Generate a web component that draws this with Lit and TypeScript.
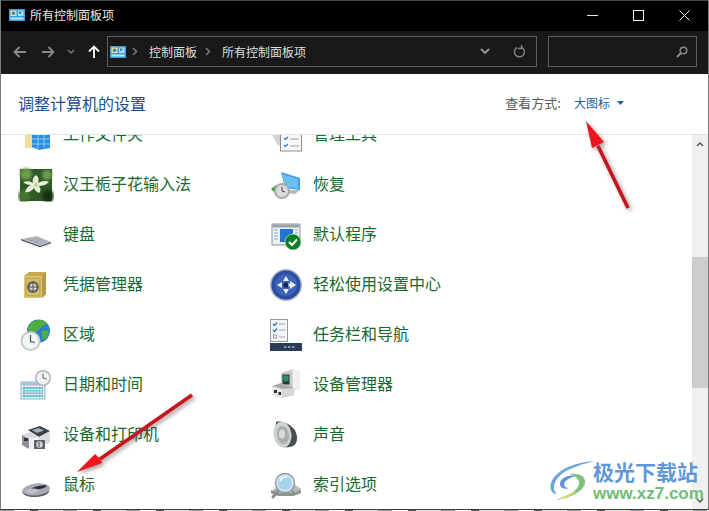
import { LitElement, html, css, svg } from "lit";
import { customElement } from "lit/decorators.js";

const cpIcon = html`<svg class="cp" width="16" height="12" viewBox="0 0 16 12">
  <rect width="16" height="12" fill="#3f9ed8"/>
  <rect x="1.500" y="1.500" width="6" height="5.500" fill="#e4dfa8"/>
  <circle cx="4.500" cy="4.200" r="1.700" fill="#3f86ae"/>
  <rect x="9" y="1.500" width="5.500" height="5.500" fill="#a8dcf4"/>
  <rect x="10" y="2.500" width="2.200" height="2.200" fill="#2f78a6"/>
  <rect x="1.500" y="8.500" width="13" height="2" fill="#bfe6f7"/>
</svg>`;

const left = [
  svg`<rect x="7" y="16" width="8" height="16" fill="#f2dc98"/><path d="M14 18l18-2v16l-11 2-7-3z" fill="#2b8fdc"/><path d="M14 23h18M14 28h18M20 17v16M26 17v15" stroke="#8cc8f2" stroke-width="1"/>`,
  svg`<defs><filter id="bl"><feGaussianBlur stdDeviation="1.500"/></filter><filter id="bl2"><feGaussianBlur stdDeviation=".5"/></filter></defs><rect x="2" y="3" width="32" height="32" fill="#2f5a24"/><g filter="url(#bl)"><circle cx="8" cy="8" r="6" fill="#6c9a4c"/><circle cx="29" cy="9" r="5" fill="#6f9c55"/><circle cx="30" cy="30" r="6" fill="#172f10"/><circle cx="6" cy="30" r="6" fill="#44752f"/></g><path d="M18 9c3 2 3 5 2 8 3-2 8-3 11-1-3 3-7 4-10 4 2 3 2 5 0 7-3-1-4-3-5-5-2 3-6 5-9 4 1-3 3-6 6-7-3 0-6-1-8-3 4-1 7-1 10 1-1-3 0-6 3-8z" fill="#e8ecdc" filter="url(#bl2)"/><circle cx="18" cy="19" r="2" fill="#c8d490"/>`,
  svg`<path d="M3 23l16-3 14 6-11 4z" fill="#bcc0ca"/><path d="M3 23l19 7 11-4v1.200l-11 4-19-7z" fill="#45474f"/><path d="M8 22.500l16 5.500M12 22l15 5M16 21.500l14 4.500M11 25l5-1M16 27l5-1.500" stroke="#8a8e9b" stroke-width=".6"/>`,
  svg`<path d="M6 10l5-4h17v22l-4 4H6z" fill="#c9a94f"/><path d="M6 10h18v22H6z" fill="#e0c878"/><path d="M24 10l4-4v22l-4 4z" fill="#b8994a"/><rect x="8" y="12" width="14" height="18" fill="#d8bd68" stroke="#a78c40" stroke-width=".7"/><circle cx="15" cy="21" r="6" fill="#6d6a60"/><circle cx="15" cy="21" r="3.500" fill="#d6d4cc"/><path d="M15 16v10M10 21h10" stroke="#4a483f" stroke-width=".9"/>`,
  svg`<circle cx="20.500" cy="15" r="11.500" fill="#2f7fc8"/><path d="M12 8c4-4 11-5 15-3 3 3 0 5-3 5-1 3-4 3-6 6-3 0-7 0-8-2 0-3 0-4 2-6zM24 15c3-1 6 0 7 1-1 4-3 6-5 8-2-2-3-6-2-9z" fill="#4fae3e"/><circle cx="12.500" cy="25" r="10" fill="#c4c9cc"/><circle cx="12.500" cy="25" r="8" fill="#f3f5f6"/><path d="M12.500 19v6.500l4.500 1" fill="none" stroke="#4a4f55" stroke-width="1.200"/>`,
  svg`<rect x="3" y="16" width="24" height="17" fill="#e3edf3" stroke="#8eb1c4"/><rect x="4" y="16.500" width="22" height="3" fill="#9ec4d8"/><path d="M5 21h20v10H5z" fill="#4fb3c4"/><path d="M5 23.500h20M5 26h20M5 28.500h20M8 21v10M11 21v10M14 21v10M17 21v10M20 21v10M23 21v10" stroke="#e9f5f8" stroke-width=".8"/><circle cx="25" cy="12" r="8" fill="#aeb4b8"/><circle cx="25" cy="12" r="6.500" fill="#f2f4f5"/><path d="M25 7.500V12l3.500 1" fill="none" stroke="#555" stroke-width="1"/>`,
  svg`<path d="M10 14l12-4 10 5-11 6z" fill="#3a3f48"/><path d="M14 14l7-2 5 2.500-7 2.500z" fill="#a8aeb6"/><path d="M4 19l8-3 9 5 11-5v10l-8 4H11l-7-4z" fill="#d8dadc"/><path d="M4 19l7 4v10l-7-4z" fill="#8f9195"/><path d="M11 23l10-2v12H11z" fill="#f0f1f1"/><rect x="6" y="22" width="4" height="3" fill="#33363b"/><rect x="16" y="24" width="11" height="9" fill="#60646a"/><circle cx="21.500" cy="28.500" r="3.200" fill="#d4d7da"/><path d="M21 26v5" stroke="#444" stroke-width="1"/>`,
  svg`<ellipse cx="18" cy="24" rx="14" ry="6.500" fill="#a5abb1" transform="rotate(-8 18 24)"/><path d="M4.500 26c5 5 19 5 27-1.500-.5 3.500-6 6-13 6.500-7 .5-13-1.500-14-5z" fill="#5c6268"/><ellipse cx="21" cy="21.500" rx="8" ry="1.600" fill="#2a2e33" transform="rotate(-12 21 21.500)"/><ellipse cx="14" cy="25" rx="6" ry="2.500" fill="#bcc2c7" transform="rotate(-8 14 25)"/>`,
];

const right = [
  svg`<path d="M4 18l6 12 3-2V18z" fill="#d0d2d6"/><rect x="12.500" y="18" width="21" height="17" fill="#f6f7f8" stroke="#8a8d92"/><path d="M16 22l1.500 1.500L20 21M16 29l1.500 1.500L20 28" fill="none" stroke="#2d7fc4" stroke-width="1.200"/><path d="M22 23h9M22 30h9" stroke="#9da1a6" stroke-width="1"/>`,
  svg`<path d="M13 6l19 6v12l-15-2z" fill="#3f9fe4"/><path d="M14 8l16 5v9.500l-13-2z" fill="#6cbff0"/><path d="M20 24l12 0-5 4-8-1z" fill="#b4b8bc"/><path d="M3 23l5-4v3c4-1 6 1 5 4-2-1-3-2-5-1v3z" fill="#3ca33c"/><circle cx="14" cy="25" r="8" fill="#a6aaae"/><circle cx="14" cy="25" r="6" fill="#d9dbdd"/><path d="M14 21v4l3 1" fill="none" stroke="#444" stroke-width="1"/>`,
  svg`<rect x="4" y="8" width="28" height="21" fill="#eef1f4" stroke="#8d949b"/><rect x="4.500" y="8.500" width="27" height="3" fill="#9aa3ac"/><rect x="12" y="13" width="13" height="13" fill="#1e74cf"/><path d="M6 14h4M6 17h4M6 20h4M6 23h4M27 14h3M27 17h3" stroke="#7dabd0" stroke-width="1"/><circle cx="25" cy="26" r="8" fill="#0e7f24"/><circle cx="25" cy="26" r="8" fill="none" stroke="#e8f4e8" stroke-width=".6"/><path d="M21 26l3 3 5-5.500" fill="none" stroke="#fff" stroke-width="2"/>`,
  svg`<circle cx="18" cy="19" r="16" fill="#aab0c6"/><circle cx="18" cy="19" r="14.500" fill="#2b4da0"/><circle cx="18" cy="19" r="11" fill="#3e63b6"/><path d="M18 10l3 5h-6zM18 28l-3-5h6zM9 19l5-3v6zM28 19l-6-4v2.500h-4v3h4V23z" fill="#e9eef8"/><circle cx="18" cy="19" r="2.500" fill="#0f2467"/>`,
  svg`<rect x="2.500" y="3.500" width="17" height="22" fill="#f4f5f7" stroke="#94989e"/><path d="M5 8l1.500 1.500L9 6.500M5 14l1.500 1.500L9 12.500" fill="none" stroke="#1f78c8" stroke-width="1.300"/><rect x="5.500" y="19" width="3" height="3" fill="none" stroke="#8b8f95" stroke-width=".8"/><path d="M11 8h6M11 14h6M11 21h6" stroke="#a2a6ab" stroke-width="1"/><rect x="2" y="27" width="32" height="8" fill="#2c3c58"/><path d="M16 31h2.500M20 31h2.500M24 31h2.500" stroke="#a3adbc" stroke-width="1.600"/>`,
  svg`<path d="M13 7l12-4 7 3v17l-14 5z" fill="#dcdeda"/><path d="M25 3l7 3v17l-7 3z" fill="#f0f1ef"/><path d="M13 7l11-3v19l-11 3z" fill="#c8cac6"/><rect x="14.500" y="8.500" width="7" height="10" fill="#1d3a33"/><rect x="15.500" y="9.500" width="5" height="6" fill="#2f8c63"/><path d="M4 20l9-3 13 5v7l-12 3-10-3z" fill="#a8aaa8"/><path d="M4 20l10 3v9L4 29z" fill="#e8e9e7"/><rect x="6" y="24" width="3" height="3" fill="#2f3030"/><rect x="10.500" y="26" width="2.500" height="3" fill="#2f3030"/><path d="M14 23l12-1v7l-12 3z" fill="#d6d8d5"/>`,
  svg`<path d="M8 6c8-2 14 3 18 7 3 4 4 10 2 14-2 4-8 5-13 4C10 27 7 21 7 14z" fill="#4a4e52"/><ellipse cx="14.500" cy="18.500" rx="9" ry="13" fill="#ccd2d0" transform="rotate(-8 14.500 18.500)"/><ellipse cx="15" cy="19" rx="6" ry="9" fill="#a8b0ae" transform="rotate(-8 15 19)"/><ellipse cx="14" cy="18" rx="3" ry="4.500" fill="#d8dcdb"/>`,
  svg`<path d="M6 23l8-5h12l7 5v4l-8 3H10l-7-3z" fill="#b6bab8"/><path d="M3 24l8 3h14l8-3v3l-8 3H11l-8-3z" fill="#8e9290"/><circle cx="25" cy="26" r="1.200" fill="#4cae4c"/><path d="M5 31l6-7" stroke="#8a8d8c" stroke-width="3" stroke-linecap="round"/><circle cx="17" cy="17" r="9.500" fill="#d8e6ee" stroke="#8da0aa" stroke-width="1.500"/><circle cx="17" cy="17" r="7" fill="#a9d3ec"/><path d="M12 15c1-3 4-4 7-4" fill="none" stroke="#fff" stroke-width="1.500"/>`,
];

const leftNames = ["工作文件夹", "汉王栀子花输入法", "键盘", "凭据管理器", "区域", "日期和时间", "设备和打印机", "鼠标"];
const rightNames = ["管理工具", "恢复", "默认程序", "轻松使用设置中心", "任务栏和导航", "设备管理器", "声音", "索引选项"];

@customElement("app-root")
export class AppRoot extends LitElement {
  static styles = css`
    :host {
      display: block;
      width: 709px;
      height: 511px;
      overflow: hidden;
      background: repeating-linear-gradient(90deg, #9a9a9a 0 14px, #fff 14px 30px, #555 30px 38px, #e8e8e8 38px 63px);
      font-family: "Noto Sans CJK SC", "Liberation Sans", sans-serif;
    }
    .window {
      position: relative;
      box-sizing: border-box;
      width: 709px;
      height: 510px;
      background: #fff;
      border-left: 1px solid #7c7c7c;
      border-right: 1px solid #7c7c7c;
      border-bottom: 1px solid #3c3c3c;
      display: flex;
      flex-direction: column;
      overflow: hidden;
    }
    .titlebar {
      height: 31px;
      flex: none;
      background: #000;
      color: #e8e8e8;
      display: flex;
      align-items: center;
      padding: 0 0 2px 8px;
      font-size: 12px;
      box-sizing: border-box;
      border-top: 1px solid #4a4a4a;
    }
    .titlebar .cp { margin-right: 5px; }
    .titlebar span { padding-bottom: 1px; }
    .winbtns {
      margin-left: auto;
      display: flex;
      gap: 35px;
      padding-right: 18px;
      align-items: center;
    }
    .winbtns svg { display: block; }
    .toolbar {
      height: 43px;
      flex: none;
      background: #191919;
      display: flex;
      align-items: center;
      box-sizing: border-box;
      padding: 0 12px 2px 0;
    }
    .nav {
      width: 106px;
      display: flex;
      flex: none;
      align-items: center;
      padding-left: 12px;
      box-sizing: border-box;
      gap: 14px;
    }
    .nav svg { display: block; }
    .nav .more { margin: 0 -1px 0 -2px; }
    .address {
      width: 430px;
      height: 31px;
      flex: none;
      box-sizing: border-box;
      border: 1px solid #5e5e5e;
      display: flex;
      align-items: center;
      padding-left: 2px;
      color: #dedede;
      font-size: 12px;
    }
    .address span { padding-bottom: 1px; }
    .address .sep { margin: 0 11px 0 6px; display: block; }
    .address .sep2 { margin: 0 11px 0 8px; display: block; }
    .address .tail { margin-left: auto; display: flex; align-items: center; gap: 23px; padding-right: 11px; }
    .search {
      width: 149px;
      height: 31px;
      flex: none;
      margin-left: 11px;
      box-sizing: border-box;
      border: 1px solid #5e5e5e;
      display: flex;
      align-items: center;
      justify-content: flex-end;
      padding-right: 8px;
    }
    .header {
      height: 60px;
      flex: none;
      display: flex;
      align-items: center;
      padding: 0 84px 0 17px;
      border-bottom: 1px solid #d9e6ec;
    }
    .heading { font-size: 16px; color: #1f4c8f; padding-bottom: 2px; }
    .view { margin-left: auto; font-size: 12px; color: #5a5a5a; display: flex; align-items: center; }
    .view .colon { margin-right: 13px; font-size: 13px; padding-bottom: 3px; }
    .view .mode { color: #1d5f9e; margin-right: 7px; padding-bottom: 3px; }
    .view svg { margin-bottom: 2px; }
    .body { flex: 1; display: flex; min-height: 0; }
    .list { flex: 1; overflow: hidden; padding-left: 17px; }
    .grid { display: grid; grid-template-columns: 250px 250px; margin-top: -26px; }
    .item {
      height: 50px;
      display: flex;
      align-items: center;
      gap: 9px;
      color: #17692f;
      font-size: 16px;
      white-space: nowrap;
    }
    .item span { padding-bottom: 2px; }
    .item svg { display: block; flex: none; }
    .scroll {
      width: 16px;
      flex: none;
      background: #f0f0f0;
      display: flex;
      flex-direction: column;
    }
    .scroll .up { height: 17px; display: flex; align-items: center; justify-content: center; flex: none; }
    .thumb { height: 131px; margin-top: 105px; background: #cdcdcd; flex: none; }
    .scroll .down { margin-top: auto; height: 17px; display: flex; align-items: center; justify-content: center; flex: none; }
    .arrows { position: absolute; left: -1px; top: 0; pointer-events: none; filter: drop-shadow(2px 2px 2px rgba(70, 40, 40, 0.5)); }
    .mark { position: absolute; left: 547px; top: 459px; width: 160px; height: 50px; display: flex; pointer-events: none; }
    .mark svg { flex: none; display: block; }
    .mark .txt { margin-left: -5px; display: flex; flex-direction: column; align-items: flex-start; }
    .mark .cn { font-size: 21px; line-height: 25px; font-weight: 700; color: #5f97d8; white-space: nowrap; }
    .mark .en { font-family: "Liberation Sans", sans-serif; font-size: 17px; line-height: 20px; color: #72bb78; font-weight: 700; white-space: nowrap; }
  `;

  private item(name: string, icon: unknown) {
    return html`<div class="item">
      <svg width="36" height="36" viewBox="0 0 36 36">${icon}</svg><span>${name}</span>
    </div>`;
  }

  render() {
    const rows = leftNames.map((n, i) => [this.item(n, left[i]), this.item(rightNames[i], right[i])]);
    const chev = html`<svg class="sep" width="6" height="9" viewBox="0 0 6 9"><path d="M1 1l3.500 3.500L1 8" fill="none" stroke="#7a7a7a" stroke-width="1.500"/></svg>`;
    const chev2 = html`<svg class="sep2" width="6" height="9" viewBox="0 0 6 9"><path d="M1 1l3.500 3.500L1 8" fill="none" stroke="#7a7a7a" stroke-width="1.500"/></svg>`;
    return html`<div class="window">
      <div class="titlebar">
        ${cpIcon}<span>所有控制面板项</span>
        <div class="winbtns">
          <svg width="11" height="11" viewBox="0 0 11 11"><path d="M0 5.500h11" stroke="#e6e6e6"/></svg>
          <svg width="11" height="11" viewBox="0 0 11 11"><rect x=".5" y=".5" width="10" height="10" fill="none" stroke="#f0f0f0"/></svg>
          <svg width="11" height="11" viewBox="0 0 11 11"><path d="M.5.500l10 10M10.500.500l-10 10" stroke="#f0f0f0"/></svg>
        </div>
      </div>
      <div class="toolbar">
        <div class="nav">
          <svg width="14" height="12" viewBox="0 0 14 12"><path d="M13 6H2M6.500 1L1.500 6l5 5" fill="none" stroke="#8a8a8a" stroke-width="1.800"/></svg>
          <svg width="14" height="12" viewBox="0 0 14 12"><path d="M1 6h11M7.500 1l5 5-5 5" fill="none" stroke="#8a8a8a" stroke-width="1.800"/></svg>
          <svg class="more" width="8" height="6" viewBox="0 0 8 6"><path d="M1 1l3 3 3-3" fill="none" stroke="#777" stroke-width="1.500"/></svg>
          <svg width="12" height="14" viewBox="0 0 12 14"><path d="M6 13V2M1 6.500l5-5 5 5" fill="none" stroke="#f4f4f4" stroke-width="1.900"/></svg>
        </div>
        <div class="address">
          ${cpIcon}${chev}<span>控制面板</span>${chev2}<span>所有控制面板项</span>
          <div class="tail">
            <svg width="10" height="7" viewBox="0 0 10 7"><path d="M1 1l4 4 4-4" fill="none" stroke="#9a9a9a" stroke-width="1.800"/></svg>
            <svg width="12" height="13" viewBox="0 0 12 13"><path d="M4 2.500a5 5 0 1 0 4.500-.2M8.500 0v3.500H5" fill="none" stroke="#7e7e7e" stroke-width="1.500"/></svg>
          </div>
        </div>
        <div class="search">
          <svg width="12" height="12" viewBox="0 0 12 12"><circle cx="7.500" cy="4.500" r="3.300" fill="none" stroke="#8a8a8a" stroke-width="1.500"/><path d="M5 7l-4 4" stroke="#8a8a8a" stroke-width="2"/></svg>
        </div>
      </div>
      <div class="header">
        <span class="heading">调整计算机的设置</span>
        <div class="view">
          <span class="colon">查看方式:</span><span class="mode">大图标</span>
          <svg width="7" height="4" viewBox="0 0 7 4"><path d="M0 0h7L3.500 4z" fill="#1d5f9e"/></svg>
        </div>
      </div>
      <div class="body">
        <div class="list"><div class="grid">${rows}</div></div>
        <div class="scroll">
          <div class="up"><svg width="8" height="6" viewBox="0 0 8 6"><path d="M1 5l3-3 3 3" fill="none" stroke="#555" stroke-width="1.500"/></svg></div>
          <div class="thumb"></div>
          <div class="down"><svg width="8" height="6" viewBox="0 0 8 6"><path d="M1 1l3 3 3-3" fill="none" stroke="#555" stroke-width="1.500"/></svg></div>
        </div>
      </div>
      <svg class="arrows" width="709" height="510" viewBox="0 0 709 510">
        <path d="M629.600 207.200L599.600 145.200 596.400 146.800 626.400 208.800z" fill="#c3161f"/>
        <path d="M586 121L592 148l6-3 6-3z" fill="#ee1420"/>
        <path d="M193 396.400L101 460.400 99 457.600 191 393.600z" fill="#c3161f"/>
        <path d="M77 472l18-18 5 5 2 4z" fill="#ee1420"/>
      </svg>
      <div class="mark">
        <svg width="50" height="44" viewBox="0 0 50 44">
          <path d="M47 2C28 3 8 10 3 24c-2 6 1 11 6 11C3 30 6 18 20 11 28 7 38 4 47 2z" fill="#6da6dc"/>
          <path d="M28 17c-8-2-16 2-16 8 0 4 5 6 9 4-4 0-6-3-4-6 2-3 7-5 11-6z" fill="#5d96d4"/>
          <path d="M22 15c9-1 16 2 15 9-1 8-14 15-29 17 10-3 22-9 23-16 1-5-4-8-9-10z" fill="#7fc07e"/>
          <path d="M8 41c8-1 18-5 22-10-6 3-14 6-22 10z" fill="#d8d468"/>
        </svg>
        <div class="txt">
          <span class="cn">极光下载站</span>
          <span class="en">www.xz7.com</span>
        </div>
      </div>
    </div>`;
  }
}
